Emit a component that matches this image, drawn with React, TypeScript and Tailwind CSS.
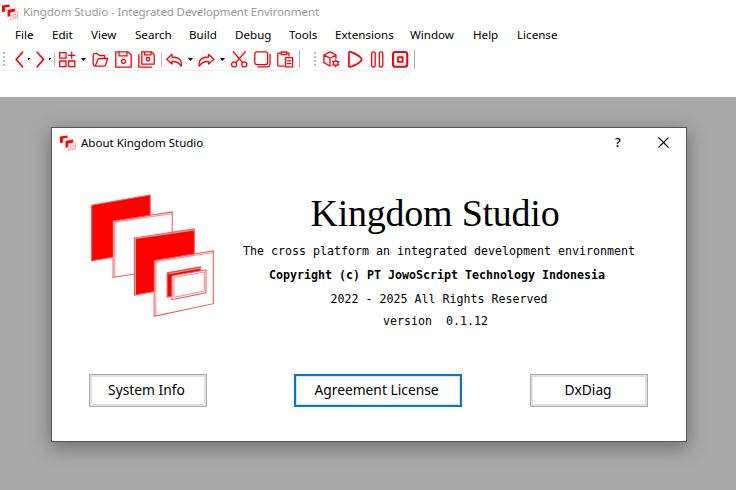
import type { ReactNode } from "react";

const menus = [
  { label: "File", w: "w-[37px]" },
  { label: "Edit", w: "w-[39px]" },
  { label: "View", w: "w-[44px]" },
  { label: "Search", w: "w-[54px]" },
  { label: "Build", w: "w-[46px]" },
  { label: "Debug", w: "w-[54px]" },
  { label: "Tools", w: "w-[46px]" },
  { label: "Extensions", w: "w-[75px]" },
  { label: "Window", w: "w-[63px]" },
  { label: "Help", w: "w-[44px]" },
  { label: "License", w: "w-[50px]" },
];

function Logo({ className }: { className: string }) {
  return (
    <svg className={className} viewBox="32 28 368 370" preserveAspectRatio="none" stroke="#ff4d4d" strokeWidth="3">
      <path d="M34 62L209 31V198L34 229Z" fill="#f00" />
      <path d="M98 109L275 82V250L98 279Z" fill="#fff" />
      <path d="M103 112L275 87M103 112V277" fill="none" strokeWidth="2" />
      <path d="M162 160L341 133V300L162 332Z" fill="#f00" />
      <path d="M164 162L341 136M165 162V330" fill="none" stroke="#ffaaaa" strokeWidth="3" />
      <path d="M221 228L398 199V358L221 396Z" fill="#fff" />
      <path d="M226 231L397 204M226 231V394" fill="none" strokeWidth="2" />
      <path d="M260 265L360 247V320L260 338Z" fill="#f00" />
      <path d="M264 268L360 251" fill="none" stroke="#fff" strokeWidth="2" />
      <path d="M274 274L376 256V325L274 346Z" fill="#fff" />
      <path d="M280 279L371 263V320L280 339Z" fill="none" strokeWidth="2" />
    </svg>
  );
}

function SmallLogo() {
  return (
    <svg className="h-[16px] w-[16px] shrink-0" viewBox="0 0 16 16">
      <path d="M0 1.6L7.6.4V3L3.2 3.8V7.6L0 8.3Z" fill="#f00" />
      <path d="M3.2 3.8L10.4 2.7V5L5.6 6V10.2L3.2 10.7Z" fill="#fff" stroke="#ffc4c4" strokeWidth=".5" />
      <path d="M5.6 6L13.2 4.6V7.4L8.4 8.4V12L5.6 13Z" fill="#f00" />
      <path d="M8.4 8.8L15.5 7.6V14.2L8.4 15.5Z" fill="#fff" stroke="#ff9e9e" strokeWidth=".8" />
      <path d="M10.2 11L14 10.3V13L10.2 13.7Z" fill="#fff" stroke="#ff7a7a" strokeWidth=".7" />
    </svg>
  );
}

function Icon({ children }: { children: ReactNode }) {
  return (
    <svg
      className="h-[17px] w-[17px] shrink-0"
      viewBox="0 0 17 17"
      fill="none"
      stroke="#fb0007"
      strokeWidth="1.3"
      strokeLinejoin="round"
      strokeLinecap="round"
    >
      {children}
    </svg>
  );
}

function Chevron({ className, d }: { className: string; d: string }) {
  return (
    <svg className={`h-[17px] w-[9px] shrink-0 ${className}`} viewBox="0 0 9 17" fill="none" stroke="#fb0007" strokeWidth="1.7" strokeLinecap="round">
      <path d={d} />
    </svg>
  );
}

function Grip() {
  return (
    <div className="ml-[3px] flex w-[2px] shrink-0 flex-col gap-[2px]">
      <i className="h-[2px] bg-[#bdbdbd]" />
      <i className="h-[2px] bg-[#bdbdbd]" />
      <i className="h-[2px] bg-[#bdbdbd]" />
      <i className="h-[2px] bg-[#bdbdbd]" />
    </div>
  );
}

function Caret() {
  return (
    <svg className="ml-[5px] h-[3px] w-[5px] shrink-0" viewBox="0 0 5 3">
      <path d="M0 0H5L2.5 3Z" fill="#000" />
    </svg>
  );
}

function Dot() {
  return (
    <svg className="ml-[4px] h-[2px] w-[2px] shrink-0" viewBox="0 0 2 2">
      <path d="M0 0H2V1H1V2H0Z" fill="#000" />
    </svg>
  );
}

function Divider({ className }: { className: string }) {
  return <div className={`h-[15px] w-px shrink-0 bg-[#c0c0c0] ${className}`} />;
}

export default function App() {
  return (
    <div className="flex h-[490px] w-[736px] flex-col overflow-hidden bg-white font-['Noto_Sans',sans-serif] text-black">
      <header className="flex h-[24px] items-center pl-[2px]">
        <SmallLogo />
        <span className="ml-[5px] text-[11.5px] leading-none tracking-[-0.11px] whitespace-nowrap text-[#999]">
          Kingdom Studio - Integrated Development Environment
        </span>
      </header>

      <nav className="flex h-[22px] items-center pl-[15px] text-[11.6px] leading-none">
        {menus.map((m) => (
          <span key={m.label} className={`${m.w} shrink-0 whitespace-nowrap`}>
            {m.label}
          </span>
        ))}
      </nav>

      <div className="flex h-[51px] items-start pt-[2px]">
        <div className="flex h-[23px] w-[300px] items-center rounded-b border-b border-[#efefef]">
          <Grip />
          <Chevron className="ml-[10px]" d="M7.5 1.2L1.2 8.5L7.5 15.8" />
          <Dot />
          <Chevron className="ml-[6px]" d="M1.2 1.2L7.5 8.5L1.2 15.8" />
          <Dot />
          <Divider className="mr-[4px] ml-[3px]" />
          <Icon>
            <path d="M.7 1.7H7V7.2H.7ZM.7 10H7V15.7H.7ZM9.6 10H15.8V15.7H9.6ZM12.7 1.2V7.4M9.6 4.3H15.8" strokeLinejoin="miter" />
          </Icon>
          <Caret />
          <div className="ml-[6px] flex gap-[6px]">
            <Icon>
              <path d="M3.2 15.2Q1.4 15.2 1.2 13V4Q1.2 2.7 2.5 2.7H5.4L7.5 4.5H12.5V7.4M3.2 15.2L5.6 9.3Q6.2 7.5 8 7.5H15.6L13.8 13.6Q13.3 15.2 11.8 15.2Z" />
            </Icon>
            <Icon>
              <path d="M.8.8H13L16.2 4V16.2H.8ZM4 1V4.8H12V1" strokeLinejoin="miter" />
              <circle cx="8.5" cy="10.3" r="2" />
            </Icon>
            <Icon>
              <path d="M3.8.8H13.5L16.2 3.5V13.2H3.8ZM6.5 1V3.8H13V1M.8 3.8V16.2H13.6" strokeLinejoin="miter" />
              <circle cx="10" cy="8.3" r="1.8" />
            </Icon>
          </div>
          <Divider className="mr-[4px] ml-[6px]" />
          <Icon>
            <path d="M6 3.3L.8 8.3L6 13V10.5Q12.5 10.2 15.2 15.2Q17 6.4 6 6Z" />
          </Icon>
          <Caret />
          <div className="w-[5px]" />
          <Icon>
            <path d="M10.5 3.3L16 8.3L10.5 13V10.5Q4 10.2 1.3 15.2Q-.5 6.4 10.5 6Z" />
          </Icon>
          <Caret />
          <div className="ml-[6px] flex gap-[6px]">
            <Icon>
              <path d="M2.2.8L11.5 11.4M14.2.8L5 11.4" />
              <circle cx="3.1" cy="13.4" r="2.5" />
              <circle cx="13.3" cy="13.4" r="2.5" />
            </Icon>
            <Icon>
              <rect x=".8" y=".8" width="12.8" height="12.8" rx="2" />
              <path d="M16 3.5V13Q16 15.9 13 15.9H3.8" />
            </Icon>
            <Icon>
              <path d="M4 2.2H2Q.8 2.2 .8 3.4V14.2Q.8 15.2 2 15.2H7M10 2.2H12V5M4.2 1H9.8V3.6H4.2Z" />
              <path d="M8.5 6.7H15.6V15.9H8.5ZM10.3 9.8H13.8M10.3 12.6H13.8" />
            </Icon>
          </div>
          <div className="ml-[5px] h-[18px] w-px bg-[#b0b0b0]" />
        </div>

        <div className="ml-[11px] flex h-[23px] w-[104px] items-center rounded-b border-b border-[#efefef]">
          <Grip />
          <div className="w-[7px]" />
          <Icon>
            <path d="M7 15L.9 11.6V4L7 .9L13 4V7M.9 4L7 7.2L13 4M7 7.2V15" />
            <path d="M12.7 8.6V15.8M9.6 10.4L15.8 14M15.8 10.4L9.6 14" strokeWidth="1.2" />
            <circle cx="12.7" cy="12.2" r="2.3" fill="#fff" />
          </Icon>
          <div className="w-[8px]" />
          <Icon>
            <path d="M.9 2Q.9.4 2.6.9Q9.5 3.2 13.2 7.3Q14 8.5 13.2 9.6Q9.5 13.8 2.6 15.8Q.9 16.2.9 14.8Z" strokeWidth="1.7" />
          </Icon>
          <div className="w-[6px]" />
          <Icon>
            <rect x=".7" y=".8" width="3.5" height="15.2" rx="1.6" />
            <rect x="8.3" y=".8" width="3.5" height="15.2" rx="1.6" />
          </Icon>
          <div className="w-[4px]" />
          <Icon>
            <rect x="1" y="1" width="14.2" height="14.8" rx="2.4" strokeWidth="2" />
            <rect x="6" y="6.1" width="4.6" height="4.8" strokeWidth="1.8" />
          </Icon>
          <div className="ml-[5px] h-[19px] w-px bg-[#b0b0b0]" />
        </div>
      </div>

      <main className="flex flex-1 items-start bg-[#a9a9a9] pt-[30px] pl-[51px]">
        <section className="flex h-[315px] w-[636px] shrink-0 flex-col border border-[#555] bg-white shadow-[0_5px_18px_1px_rgba(0,0,0,0.34)]">
          <div className="flex h-[29px] items-center pl-[8px]">
            <SmallLogo />
            <span className="ml-[5px] w-[534px] text-[11.5px] leading-none">About Kingdom Studio</span>
            <span className="w-[43px] text-[13px] leading-none font-medium">?</span>
            <svg className="h-[11px] w-[11px]" viewBox="0 0 11 11" stroke="#000" strokeWidth="1.1">
              <path d="M.5.5L10.5 10.5M10.5.5L.5 10.5" />
            </svg>
          </div>

          <div className="flex h-[217px] pt-[37px] pl-[39px]">
            <Logo className="h-[123px] w-[123px] shrink-0" />
            <div className="ml-[17px] flex w-[410px] flex-col items-center pt-px font-['DejaVu_Sans_Mono',monospace] text-[11.63px] whitespace-pre">
              <h1 className="h-[43px] pr-[2px] font-['Liberation_Serif',serif] text-[38px] leading-[37px] tracking-[-0.25px]">Kingdom Studio</h1>
              <p className="h-[24px] pl-[6px] leading-[26px]">The cross platform an integrated development environment</p>
              <p className="h-[24px] pl-[2px] leading-[26px] font-bold">Copyright (c) PT JowoScript Technology Indonesia</p>
              <p className="h-[22px] pl-[6px] leading-[26px]">2022 - 2025 All Rights Reserved</p>
              <p className="h-[24px] pr-px leading-[26px]">version  0.1.12</p>
            </div>
          </div>

          <div className="flex pl-[37px] text-[13.8px] leading-none">
            <button className="h-[33px] w-[118px] border border-[#adadad] bg-white pr-[3px] pb-[2px] shadow-[inset_0_0_0_2px_#e1e1e1]">System Info</button>
            <button className="ml-[87px] h-[33px] w-[168px] border-2 border-[#0078d7] bg-white pr-[3px] pb-[2px] shadow-[inset_0_0_0_1px_#e1e1e1]">
              Agreement License
            </button>
            <button className="ml-[68px] h-[33px] w-[118px] border border-[#adadad] bg-white pr-[2px] pb-[2px] shadow-[inset_0_0_0_2px_#e1e1e1]">DxDiag</button>
          </div>
        </section>
      </main>
    </div>
  );
}
